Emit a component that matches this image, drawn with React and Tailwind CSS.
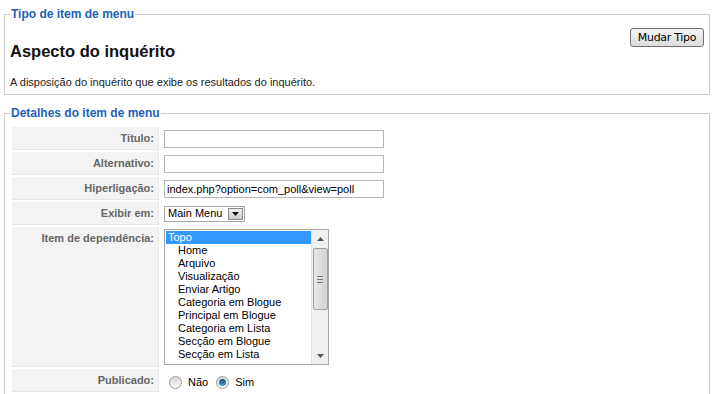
import React from "react";

const parents = [
  "Home",
  "Arquivo",
  "Visualização",
  "Enviar Artigo",
  "Categoria em Blogue",
  "Principal em Blogue",
  "Categoria em Lista",
  "Secção em Blogue",
  "Secção em Lista",
];

function Row({ label, tall, children }) {
  return (
    <div className="flex gap-px">
      <div
        className={`w-[147px] shrink-0 bg-[#f3f3f3] border-b border-r border-[#e6e6e6] pr-[4px] text-right text-[11px] font-bold text-[#666] ${
          tall ? "pt-[3px] h-[140px]" : "h-[23px] flex items-center justify-end"
        }`}
      >
        {label}
      </div>
      <div className={`pl-[4px] ${tall ? "pt-[2px]" : "flex items-center"}`}>{children}</div>
    </div>
  );
}

function TextInput({ value }) {
  return (
    <div className="w-[220px] h-[18px] border border-[#b5b5b5] bg-white px-[2px] text-[11px] leading-[16px] text-black">
      {value}
    </div>
  );
}

function Radio({ checked }) {
  return (
    <span className="w-[13px] h-[13px] rounded-full border border-[#9a9a9a] bg-gradient-to-b from-[#d8d8d8] to-[#fafafa] flex items-center justify-center">
      {checked && (
        <span className="w-[7px] h-[7px] rounded-full bg-gradient-to-b from-[#1b4f7a] to-[#3aa0d8]" />
      )}
    </span>
  );
}

export default function App() {
  return (
    <div className="bg-white pt-[6px] pl-[4px] pr-[6px] font-['Liberation_Sans',Arial,sans-serif] text-black">
      <fieldset className="border border-[#cccccc] pl-[5px] pr-[5px] pb-[5px]">
        <legend className="px-[1px] text-[12px] leading-[16px] font-bold text-[#1f5fb8]">
          Tipo de item de menu
        </legend>
        <div className="flex justify-between items-start">
          <div>
            <h2 className="mt-[19px] text-[16.5px] leading-[20px] font-bold text-[#111]">
              Aspecto do inquérito
            </h2>
            <p className="mt-[14px] text-[11px] leading-[14px] text-[#222]">
              A disposição do inquérito que exibe os resultados do inquérito.
            </p>
          </div>
          <button className="mt-[6px] w-[74px] h-[19px] rounded-[3px] border border-[#707070] bg-gradient-to-b from-[#f4f4f4] to-[#dcdcdc] text-[11px] leading-[16px] text-black font-['DejaVu_Sans',sans-serif] tracking-[-0.3px]">
            Mudar Tipo
          </button>
        </div>
      </fieldset>

      <fieldset className="mt-[10px] border border-[#cccccc] pl-[7px] pr-[5px] pb-[2px]">
        <legend className="-ml-[2px] px-[1px] text-[12px] leading-[16px] font-bold text-[#1f5fb8]">
          Detalhes do item de menu
        </legend>
        <div className="mt-[6px] flex flex-col gap-[2px]">
          <Row label="Título:">
            <TextInput value="" />
          </Row>
          <Row label="Alternativo:">
            <TextInput value="" />
          </Row>
          <Row label="Hiperligação:">
            <TextInput value="index.php?option=com_poll&view=poll" />
          </Row>
          <Row label="Exibir em:">
            <div className="w-[81px] h-[16px] border border-[#a5a5a5] bg-white flex items-center justify-between pl-[3px] pr-px text-[11px] text-black">
              <span>Main Menu</span>
              <span className="w-[15px] h-[12px] border border-[#8a8a8a] bg-gradient-to-b from-[#f2f2f2] to-[#c9c9c9] flex items-center justify-center">
                <svg width="7" height="4" viewBox="0 0 7 4">
                  <path d="M0 0h7L3.5 4z" fill="#111" />
                </svg>
              </span>
            </div>
          </Row>
          <Row label="Item de dependência:" tall>
            <div className="w-[165px] h-[136px] border border-[#a9a9a9] bg-white flex text-[11px] leading-[13px] text-black overflow-hidden">
              <div className="flex-1 pt-px pl-px">
                <div className="bg-[#3399ff] text-white pl-[2px]">Topo</div>
                {parents.map((p) => (
                  <div key={p} className="pl-[12px]">
                    {p}
                  </div>
                ))}
              </div>
              <div className="w-[17px] bg-[#f0f0f0] border-l border-[#e3e3e3] flex flex-col items-center">
                <div className="h-[17px] flex items-center justify-center">
                  <svg width="7" height="4" viewBox="0 0 7 4">
                    <path d="M0 4h7L3.5 0z" fill="#555" />
                  </svg>
                </div>
                <div className="w-[15px] h-[62px] mt-px rounded-[2px] border border-[#a0a0a0] bg-gradient-to-r from-[#e8e8e8] to-[#d2d2d2] flex flex-col items-center justify-center gap-[2px]">
                  <span className="w-[6px] h-px bg-[#777]" />
                  <span className="w-[6px] h-px bg-[#777]" />
                  <span className="w-[6px] h-px bg-[#777]" />
                </div>
                <div className="flex-1" />
                <div className="h-[17px] flex items-center justify-center">
                  <svg width="7" height="4" viewBox="0 0 7 4">
                    <path d="M0 0h7L3.5 4z" fill="#555" />
                  </svg>
                </div>
              </div>
            </div>
          </Row>
          <Row label="Publicado:">
            <div className="flex items-center pl-[5px] pt-[4px] text-[11px] text-black">
              <Radio />
              <span className="ml-[6px]">Não</span>
              <span className="ml-[8px]">
                <Radio checked />
              </span>
              <span className="ml-[6px]">Sim</span>
            </div>
          </Row>
        </div>
      </fieldset>
    </div>
  );
}
